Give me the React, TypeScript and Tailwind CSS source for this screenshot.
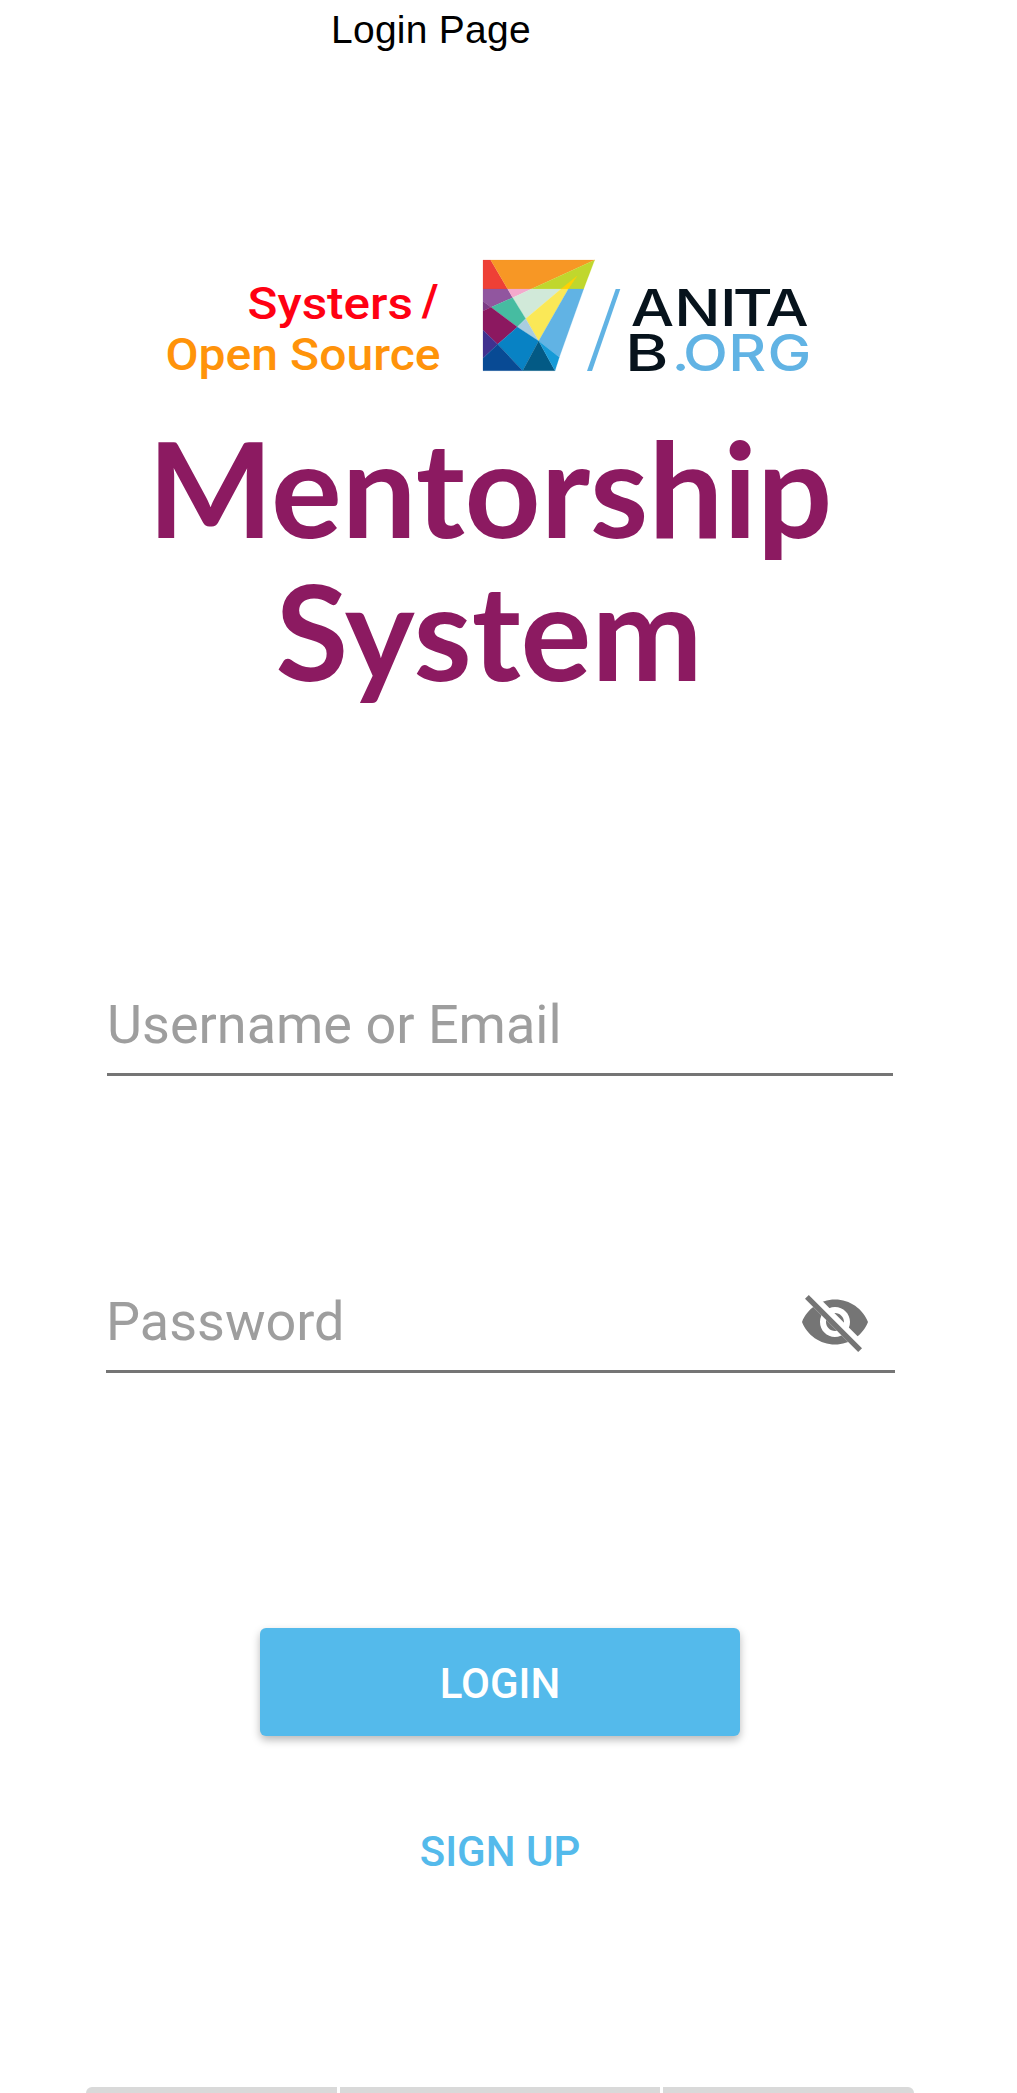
import React from "react";

const facets: { points: string; fill: string }[] = [
  { points: "24,30 47,30 98,117 24,117", fill: "#ee4036" },
  { points: "47,30 359,30 169,117 98,117", fill: "#f79725" },
  { points: "359,30 326,117 169,117", fill: "#c0d72d" },
  { points: "306,78 280,117 258,117", fill: "#fdd105" },
  { points: "24,117 98,117 113,143 48,172 24,154", fill: "#91569f" },
  { points: "24,154 48,172 24,183", fill: "#7c3b86" },
  { points: "98,117 169,117 113,143", fill: "#f3a9cc" },
  { points: "169,117 258,117 152,206 113,143", fill: "#d1e9d9" },
  { points: "258,117 280,117 191,273 152,206", fill: "#fae857" },
  { points: "280,117 326,117 253,322 191,273", fill: "#61b3e4" },
  { points: "113,143 152,206 127,231 48,172", fill: "#46bca1" },
  { points: "152,206 191,273 127,231", fill: "#a9cde0" },
  { points: "48,172 127,231 68,283 24,240 24,183", fill: "#8c1860" },
  { points: "24,240 68,283 24,325", fill: "#40318f" },
  { points: "127,231 191,273 143,362 68,283", fill: "#0882c4" },
  { points: "68,283 143,362 24,362 24,325", fill: "#084a94" },
  { points: "191,273 240,362 143,362", fill: "#035a85" },
  { points: "191,273 253,322 240,362", fill: "#159ad7" },
];

function Logo() {
  return (
    <svg className="ml-[140px] block h-[150px] w-[700px] shrink-0" viewBox="140 240 700 150" role="img" aria-label="Systers Open Source / AnitaB.org">
      <g fontFamily="Roboto" fontWeight="500" fontSize="44">
        <text x="247.5" y="318.7" fill="#ff0012" textLength="165.5" lengthAdjust="spacingAndGlyphs">Systers</text>
        <text x="422" y="315.5" fill="#ff0012" fontWeight="700">/</text>
        <text x="165.5" y="369.7" fill="#ff930a" textLength="275" lengthAdjust="spacingAndGlyphs">Open Source</text>
      </g>
      <g transform="translate(475 250) scale(0.33333)">
        {facets.map((f) => (
          <polygon key={f.points} points={f.points} fill={f.fill} stroke={f.fill} strokeWidth="0.6" />
        ))}
      </g>
      <polygon points="615.7,289 620.3,289 592,371 587,371" fill="#61b3e4" />
      <g fontFamily="Inter" fontWeight="500" fontSize="51">
        <text transform="translate(631 326) scale(1.2 1)" x="-0.3 36 74.2 84.8 111.9" y="0" fill="#07131c">ANITA</text>
        <text transform="translate(625 371) scale(1.3 1)" fill="#07131c">B</text>
        <text transform="translate(673 371) scale(1.15 1)" x="-1.2 8.6 48 82.2" y="0" fill="#61b3e4">.ORG</text>
      </g>
    </svg>
  );
}

function PasswordToggleIcon() {
  return (
    <svg className="block size-[72px]" viewBox="0 0 24 24">
      <defs>
        <clipPath id="eye-clip">
          <path d="M2,4.27 L19.73,22 L22.27,19.46 L4.54,1.73 L4.54,1 L23,1 L23,23 L1,23 L1,4.27 Z" />
        </clipPath>
      </defs>
      <path
        clipPath="url(#eye-clip)"
        fill="#757575"
        d="M12,4.5C7,4.5 2.73,7.61 1,12c1.73,4.39 6,7.5 11,7.5s9.27,-3.11 11,-7.5c-1.73,-4.39 -6,-7.5 -11,-7.5zM12,17c-2.76,0 -5,-2.24 -5,-5s2.24,-5 5,-5 5,2.24 5,5 -2.24,5 -5,5zM12,9c-1.66,0 -3,1.34 -3,3s1.34,3 3,3 3,-1.34 3,-3 -1.34,-3 -3,-3z"
      />
      <path d="M3.27,4.27 L19.74,20.74" stroke="#757575" strokeWidth="1.8" strokeLinecap="square" />
    </svg>
  );
}

export default function App() {
  return (
    <main className="flex h-[2093px] w-[1017px] flex-col overflow-hidden bg-white font-[Roboto,sans-serif]">
      <header className="ml-[331px] h-[60px] shrink-0 font-['Liberation_Sans',sans-serif] text-[39px] leading-[60px] tracking-[0.25px] whitespace-nowrap text-black">
        Login Page
      </header>
      <div className="h-[180px] shrink-0" />
      <Logo />
      <h1 className="mt-[25px] ml-[90px] w-[800px] shrink-0 text-center font-[Lato,sans-serif] text-[132.7px] leading-[143px] font-bold text-[#8c1a61]">
        Mentorship
        <span className="block pr-[2px]">System</span>
      </h1>

      <div className="mt-[284px] ml-[107px] h-[91px] w-[786px] shrink-0 border-b-[3px] border-[#757575] text-[54px] leading-[79px] text-[#9e9e9e]">
        Username or Email
      </div>
      <div className="mt-[206px] ml-[106px] flex h-[91px] w-[789px] shrink-0 justify-between border-b-[3px] border-[#757575] pr-6 text-[54px] leading-[79px] text-[#9e9e9e]">
        <span>Password</span>
        <button className="mt-[3.5px] h-[72px]" aria-label="Show password">
          <PasswordToggleIcon />
        </button>
      </div>

      <button className="mt-[255px] ml-[260px] h-[108px] w-[480px] shrink-0 rounded-md bg-[#54baeb] pt-[3px] text-[42px] leading-[105px] font-medium text-white shadow-[0_4px_8px_rgba(0,0,0,0.28)]">
        LOGIN
      </button>
      <button className="mt-[61px] ml-[260px] h-[108px] w-[480px] shrink-0 pt-[2px] text-[42px] leading-[106px] font-medium text-[#54baeb]">
        SIGN UP
      </button>

      <div className="mt-[182px] ml-[86px] flex h-[20px] w-[828px] shrink-0 gap-[3px] overflow-hidden rounded-t-md">
        <div className="w-[251px] bg-[#d9d9d9]" />
        <div className="w-[320px] bg-[#d9d9d9]" />
        <div className="w-[251px] bg-[#d9d9d9]" />
      </div>
    </main>
  );
}
